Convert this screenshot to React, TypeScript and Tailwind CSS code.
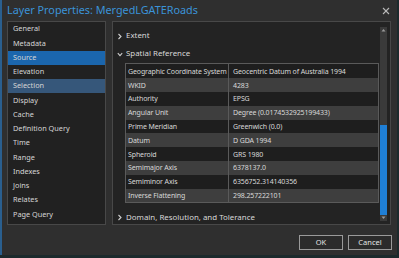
import React from "react";

const navItems = [
  "General",
  "Metadata",
  "Source",
  "Elevation",
  "Selection",
  "Display",
  "Cache",
  "Definition Query",
  "Time",
  "Range",
  "Indexes",
  "Joins",
  "Relates",
  "Page Query",
];

const rows: [string, string][] = [
  ["Geographic Coordinate System", "Geocentric Datum of Australia 1994"],
  ["WKID", "4283"],
  ["Authority", "EPSG"],
  ["Angular Unit", "Degree (0.0174532925199433)"],
  ["Prime Meridian", "Greenwich (0.0)"],
  ["Datum", "D GDA 1994"],
  ["Spheroid", "GRS 1980"],
  ["Semimajor Axis", "6378137.0"],
  ["Semiminor Axis", "6356752.314140356"],
  ["Inverse Flattening", "298.257222101"],
];

function ChevronRight() {
  return (
    <svg width="6" height="7" viewBox="0 0 6 7" className="shrink-0">
      <polyline points="1.5,1 4,3.5 1.5,6" fill="none" stroke="#cfcfcf" strokeWidth="1.1" />
    </svg>
  );
}

function ChevronDown() {
  return (
    <svg width="6" height="7" viewBox="0 0 6 7" className="shrink-0">
      <polyline points="0.8,2.2 3,4.6 5.2,2.2" fill="none" stroke="#cfcfcf" strokeWidth="1.1" />
    </svg>
  );
}

export default function App() {
  return (
    <div className="w-[399px] h-[258px] bg-[#1c2a2c] overflow-hidden font-['Noto_Sans',sans-serif]">
      <div className="w-[397px] h-[255px] bg-[#2f2f2f] border-l-2 border-[#2a5f8f] flex flex-col">
        {/* Title bar */}
        <div className="h-[21px] flex items-center justify-between pl-[5px] pr-[7px]">
          <span className="text-[10.8px] leading-none text-[#3b93d8]">
            Layer Properties: MergedLGATERoads
          </span>
          <svg width="8" height="8" viewBox="0 0 8 8">
            <line x1="1" y1="1" x2="7" y2="7" stroke="#b8b8b8" strokeWidth="1.1" />
            <line x1="7" y1="1" x2="1" y2="7" stroke="#b8b8b8" strokeWidth="1.1" />
          </svg>
        </div>

        {/* Body */}
        <div className="flex gap-[6px] pl-[5px] pr-[6px] h-[204px]">
          {/* Nav */}
          <div className="w-[99px] h-full border border-[#484848] bg-[#212121]">
            {navItems.map((item) => {
              const bg =
                item === "Source"
                  ? "bg-[#1b66ad]"
                  : item === "Selection"
                  ? "bg-[#36577a]"
                  : "";
              return (
                <div
                  key={item}
                  className={`h-[14.25px] flex items-center pl-[5px] text-[7.3px] leading-none text-[#d6d6d6] ${bg}`}
                >
                  {item}
                </div>
              );
            })}
          </div>

          {/* Content panel */}
          <div className="flex-1 h-full border border-[#484848] bg-[#232323] flex">
            <div className="flex-1 flex flex-col pl-[4px] pr-[1px]">
              <div className="h-[13px] mt-[8px] flex items-center gap-[3px]">
                <ChevronRight />
                <span className="text-[7.9px] leading-none text-[#d8d8d8]">Extent</span>
              </div>
              <div className="h-[13px] mt-[5px] flex items-center gap-[3px]">
                <ChevronDown />
                <span className="text-[7.9px] leading-none text-[#d8d8d8]">Spatial Reference</span>
              </div>
              <div className="ml-[8px] mt-[3px] border border-[#5a5a5a] flex flex-col">
                {rows.map(([k, v], i) => (
                  <div
                    key={k}
                    className={`h-[13.8px] flex text-[7px] tracking-[-0.12px] leading-none text-[#d8d8d8] ${
                      i % 2 === 1 ? "bg-[#3e3e3e]" : "bg-[#1e1e1e]"
                    }`}
                  >
                    <div className="w-[103px] shrink-0 border-r border-[#5a5a5a] flex items-center pl-[2px] whitespace-nowrap overflow-hidden">
                      {k}
                    </div>
                    <div className="flex-1 flex items-center pl-[4px] whitespace-nowrap overflow-hidden">
                      {v}
                    </div>
                  </div>
                ))}
              </div>
              <div className="h-[13px] mt-[8px] flex items-center gap-[3px]">
                <ChevronRight />
                <span className="text-[7.9px] leading-none text-[#d8d8d8]">
                  Domain, Resolution, and Tolerance
                </span>
              </div>
            </div>
            {/* Scrollbar */}
            <div className="w-[7px] mr-[3px] mt-[5px] mb-[3px] bg-[#3a3a3a] flex flex-col items-center">
              <svg width="7" height="6" viewBox="0 0 7 6" className="shrink-0">
                <polygon points="1.5,4.5 3.5,2 5.5,4.5" fill="#9a9a9a" />
              </svg>
              <div className="flex-1 w-full flex flex-col justify-end">
                <div className="h-[90px] w-full bg-[#1f7fd6]" />
              </div>
              <svg width="7" height="6" viewBox="0 0 7 6" className="shrink-0">
                <polygon points="1.5,1.5 3.5,4 5.5,1.5" fill="#9a9a9a" />
              </svg>
            </div>
          </div>
        </div>

        {/* Footer */}
        <div className="flex-1 flex items-start justify-end gap-[5px] pr-[5px] pt-[10px]">
          <button className="w-[44px] h-[15px] border border-[#9a9a9a] bg-[#2b2b2b] text-[7.5px] leading-none text-[#e4e4e4] flex items-center justify-center">
            OK
          </button>
          <button className="w-[44px] h-[15px] border border-[#9a9a9a] bg-[#2b2b2b] text-[7.5px] leading-none text-[#e4e4e4] flex items-center justify-center">
            Cancel
          </button>
        </div>
      </div>
    </div>
  );
}
